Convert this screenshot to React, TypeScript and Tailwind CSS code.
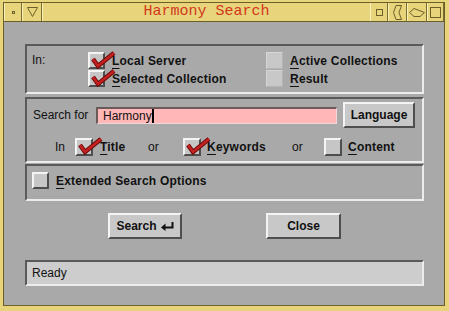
import React from 'react';

const sunken =
  'border-2 border-t-[#5a5a5a] border-l-[#5a5a5a] border-b-[#ececec] border-r-[#ececec]';
const raised =
  'border-2 border-t-[#f4f4f4] border-l-[#f4f4f4] border-b-[#4e4e4e] border-r-[#4e4e4e]';

function Tick() {
  return (
    <svg className="absolute -top-[3px] left-0 overflow-visible" width="26" height="20" viewBox="0 0 26 20" aria-hidden="true">
      <polyline points="3,8 8,15 24,2" fill="none" stroke="#6e0a0a" strokeWidth="4.5" strokeLinejoin="miter" />
      <polyline points="3,8 8,15 24,2" fill="none" stroke="#c42020" strokeWidth="2.5" strokeLinejoin="miter" />
    </svg>
  );
}

function Box({ checked = false, flat = false, size = 'w-[17px] h-[17px]' }: { checked?: boolean; flat?: boolean; size?: string }) {
  return (
    <span
      className={
        'relative inline-block shrink-0 ' +
        size +
        ' ' +
        (flat
          ? 'border border-t-[#d6d6d6] border-l-[#d6d6d6] border-b-[#b4b4b4] border-r-[#b4b4b4] bg-[#c8c8c8]'
          : raised + ' bg-[#c6c6c6]')
      }
    >
      {checked && <Tick />}
    </span>
  );
}

function Label({ m, rest, bold = true }: { m: string; rest: string; bold?: boolean }) {
  return (
    <span className={bold ? 'font-bold tracking-[0.2px]' : ''}>
      <span className="underline underline-offset-[3px] decoration-1">{m}</span>
      {rest}
    </span>
  );
}

function TitleButton({ w, children }: { w: string; children?: React.ReactNode }) {
  return (
    <div className={'flex items-center justify-center border-l border-r border-l-[#faf1b8] border-r-[#7a6c2c] ' + w}>
      {children}
    </div>
  );
}

export default function App() {
  return (
    <div
      className="w-[449px] h-[311px] bg-[#e7d47b] pt-[2px] pl-[3px] pr-[4px] pb-[5px] flex flex-col text-[12px] text-[#111]"
      style={{ fontFamily: '"Liberation Sans", Arial, sans-serif' }}
    >
      <div className="flex-1 flex flex-col border border-[#6c602a]">
        {/* Title bar */}
        <div className="h-[19px] flex border-b border-b-[#6c602a] bg-[#e7d47b]">
          <TitleButton w="w-[18px]">
            <span className="block w-[3px] h-[3px] border border-[#6c602a]" />
          </TitleButton>
          <TitleButton w="w-[20px]">
            <svg width="11" height="10" viewBox="0 0 11 10">
              <polygon points="0.5,0.5 10.5,0.5 5.5,9.5" fill="none" stroke="#6c602a" />
            </svg>
          </TitleButton>
          <div
            className="flex-1 flex items-center justify-center text-[15px] text-[#d2381a] border-l border-l-[#faf1b8]"
            style={{ fontFamily: '"Liberation Mono", monospace' }}
          >
            Harmony Search
          </div>
          <TitleButton w="w-[18px]">
            <span className="block w-[7px] h-[7px] border border-[#6c602a]" />
          </TitleButton>
          <TitleButton w="w-[19px]">
            <svg width="10" height="15" viewBox="0 0 10 15">
              <polygon points="3,0.5 8.5,0.5 6,7.5 8.5,14.5 3,14.5 0.5,7.5" fill="none" stroke="#6c602a" />
            </svg>
          </TitleButton>
          <TitleButton w="w-[20px]">
            <svg width="16" height="9" viewBox="0 0 16 9">
              <polygon points="0.5,4.5 5,0.5 15.5,4.5 11,8.5 5,8.5" fill="none" stroke="#6c602a" />
            </svg>
          </TitleButton>
          <TitleButton w="w-[17px]">
            <span className="block w-[11px] h-[11px] border border-[#6c602a]" />
          </TitleButton>
        </div>

        {/* Body */}
        <div className="flex-1 bg-[#a9a9a9] pt-[22px] pl-[21px] pr-[20px] flex flex-col">
          {/* Scope box */}
          <div className={sunken + ' h-[50px] pt-[6px] pl-[5px] flex'}>
            <span className="w-[56px] leading-[17px]">In:</span>
            <div className="w-[178px] flex flex-col gap-[1px]">
              <div className="flex items-center gap-[7px] h-[17px]">
                <Box checked />
                <Label m="L" rest="ocal Server" />
              </div>
              <div className="flex items-center gap-[7px] h-[17px]">
                <Box checked />
                <Label m="S" rest="elected Collection" />
              </div>
            </div>
            <div className="flex flex-col gap-[1px]">
              <div className="flex items-center gap-[7px] h-[17px]">
                <Box flat />
                <Label m="A" rest="ctive Collections" />
              </div>
              <div className="flex items-center gap-[7px] h-[17px]">
                <Box flat />
                <Label m="R" rest="esult" />
              </div>
            </div>
          </div>

          {/* Search box */}
          <div className={sunken + ' mt-[3px] h-[66px] pt-[3px] pl-[6px] flex flex-col'}>
            <div className="flex items-center h-[26px]">
              <span className="w-[63px]">Search for</span>
              <div className="w-[241px] h-[17px] bg-[#ffb7b7] border-t-2 border-l-2 border-t-[#6a5a5a] border-l-[#6a5a5a] border-b border-r border-b-[#f0d8d8] border-r-[#f0d8d8] flex items-center pl-[5px]">
                <span className="leading-none">Harmony</span>
                <span className="block w-[2px] h-[14px] bg-black" />
              </div>
              <button className={raised + ' ml-[6px] w-[72px] h-[26px] bg-[#c8c8c8] font-bold text-[12px] leading-none'}>
                Language
              </button>
            </div>
            <div className="mt-[10px] h-[18px] flex items-center pl-[22px]">
              <span className="w-[20px]">In</span>
              <Box checked size="w-[18px] h-[18px]" />
              <span className="ml-[7px] w-[48px]">
                <Label m="T" rest="itle" />
              </span>
              <span className="w-[35px]">or</span>
              <Box checked size="w-[18px] h-[18px]" />
              <span className="ml-[6px] w-[85px]">
                <Label m="K" rest="eywords" />
              </span>
              <span className="w-[32px]">or</span>
              <Box size="w-[18px] h-[18px]" />
              <span className="ml-[6px]">
                <Label m="C" rest="ontent" />
              </span>
            </div>
          </div>

          {/* Extended options */}
          <div className={sunken + ' mt-[1px] h-[37px] pt-[6px] pl-[5px] flex items-start'}>
            <div className="flex items-center gap-[7px] h-[17px]">
              <Box />
              <Label m="E" rest="xtended Search Options" />
            </div>
          </div>

          {/* Actions */}
          <div className="mt-[12px] flex pl-[83px] gap-[84px]">
            <button className={raised + ' w-[74px] h-[26px] bg-[#c8c8c8] font-bold text-[12px] flex items-center justify-center gap-[4px]'}>
              Search
              <svg width="13" height="9" viewBox="0 0 13 9" aria-hidden="true">
                <path d="M11.5,0 V5.5 H3" fill="none" stroke="#111" strokeWidth="2" />
                <polygon points="0,5.5 4.5,1.5 4.5,9" fill="#111" />
              </svg>
            </button>
            <button className={raised + ' w-[75px] h-[26px] bg-[#c8c8c8] font-bold text-[12px]'}>Close</button>
          </div>

          {/* Status bar */}
          <div className={sunken + ' mt-[21px] h-[26px] bg-[#cdcdcd] pl-[5px] flex items-center'}>Ready</div>
        </div>
      </div>
    </div>
  );
}
